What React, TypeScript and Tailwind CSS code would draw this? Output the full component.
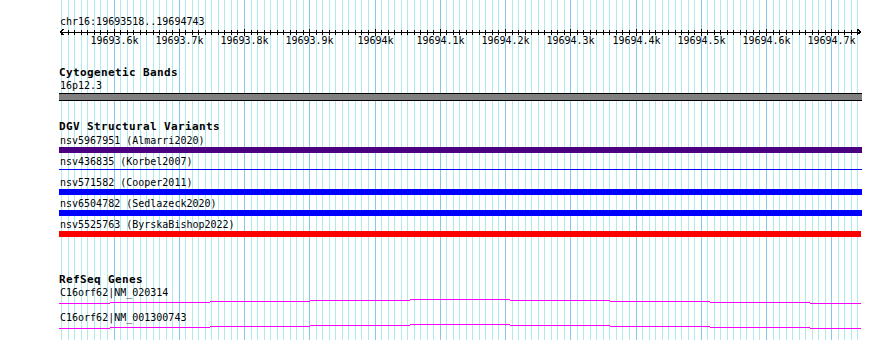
import React from 'react';

// ruler / grid geometry: 19693.6k sits at x=114, 10bp = 6.525px
const gridLines = Array.from({ length: 123 }, (_, i) => {
  const k = i - 8;
  return { x: Math.floor(114 + 6.525 * k), major: k % 10 === 0 };
});

const tickLabels = [
  '19693.6k', '19693.7k', '19693.8k', '19693.9k', '19694k', '19694.1k',
  '19694.2k', '19694.3k', '19694.4k', '19694.5k', '19694.6k', '19694.7k',
];

const variants = [
  { name: 'nsv5967951 (Almarri2020)', color: 'bg-[#4b0082]', thin: false, w: 'w-[803px]' },
  { name: 'nsv436835 (Korbel2007)', color: 'bg-[#0000ff]', thin: true, w: 'w-[803px]' },
  { name: 'nsv571582 (Cooper2011)', color: 'bg-[#0000ff]', thin: false, w: 'w-[803px]' },
  { name: 'nsv6504782 (Sedlazeck2020)', color: 'bg-[#0000ff]', thin: false, w: 'w-[803px]' },
  { name: 'nsv5525763 (ByrskaBishop2022)', color: 'bg-[#ff0000]', thin: false, w: 'w-[802px]' },
];

const genes = ['C16orf62|NM_020314', 'C16orf62|NM_001300743'];

// shallow intron "hat" drawn as 1px steps
const hatSteps: Array<[number, number, number]> = [
  [59, 110, 5], [110, 210, 4], [210, 310, 3], [310, 410, 2], [410, 510, 1],
  [510, 610, 2], [610, 710, 3], [710, 810, 4], [810, 861, 5],
];

const textCls = "pl-[60px] text-[10px] leading-[13px] h-[12px] text-black whitespace-nowrap";
const titleCls = "pl-[59px] text-[11px] leading-[12px] h-[12px] tracking-[0.38px] font-bold text-black whitespace-nowrap";

function Grid() {
  return (
    <svg className="absolute inset-0" width={890} height={340} shapeRendering="crispEdges">
      {gridLines.map((g, i) => (
        <rect key={i} x={g.x} y={0} width={1} height={340} fill={g.major ? '#86c8ec' : '#aeeaee'} />
      ))}
    </svg>
  );
}

function Ruler() {
  return (
    <svg className="block" width={890} height={21} shapeRendering="crispEdges">
      <rect x={60} y={5} width={801} height={1} fill="#000" />
      {gridLines.map((g, i) =>
        g.major ? (
          <rect key={i} x={g.x} y={2} width={1} height={7} fill="#000" />
        ) : (
          <rect key={i} x={g.x} y={3} width={1} height={5} fill="#000" />
        )
      )}
      <polyline points="64,2 60,5 64,8" fill="none" stroke="#000" strokeWidth={1} />
      <polyline points="857,2 861,5 857,8" fill="none" stroke="#000" strokeWidth={1} />
      {tickLabels.map((t, m) => (
        <text
          key={t}
          x={gridLines[8 + m * 10].x + 0.5}
          y={17}
          textAnchor="middle"
          fontFamily="'DejaVu Sans Mono', monospace"
          fontSize={10}
          fill="#000"
          shapeRendering="auto"
        >
          {t}
        </text>
      ))}
    </svg>
  );
}

function GeneHat() {
  return (
    <svg className="block" width={890} height={6} shapeRendering="crispEdges">
      {hatSteps.map(([x1, x2, y]) => (
        <rect key={x1} x={x1} y={y} width={x2 - x1} height={1} fill="#ff00ff" />
      ))}
    </svg>
  );
}

export default function App() {
  return (
    <div className="relative w-[890px] h-[340px] overflow-hidden bg-white font-['DejaVu_Sans_Mono',monospace]">
      <Grid />
      <div className="relative pt-[15px]">
        <div className={textCls}>chr16:19693518..19694743</div>
        <Ruler />

        {/* Cytogenetic Bands */}
        <div className={`${titleCls} mt-[19px]`}>Cytogenetic Bands</div>
        <div className={textCls}>16p12.3</div>
        <div className="ml-[59px] mt-[2px] w-[803px] h-[8px] bg-[#808080] border-y border-black" />

        {/* DGV Structural Variants */}
        <div className={`${titleCls} mt-[20px]`}>DGV Structural Variants</div>
        <div className="mt-[1px]">
          {variants.map((v) => (
            <div key={v.name} className="h-[21px]">
              <div className={textCls}>{v.name}</div>
              <div className="mt-[1px] h-[6px] ml-[59px]">
                {v.thin ? (
                  <div className={`mt-[2px] h-[1px] ${v.w} ${v.color}`} />
                ) : (
                  <div className={`h-[6px] ${v.w} ${v.color}`} />
                )}
              </div>
            </div>
          ))}
        </div>

        {/* RefSeq Genes */}
        <div className={`${titleCls} mt-[35px]`}>RefSeq Genes</div>
        {genes.map((g) => (
          <div key={g} className="h-[25px]">
            <div className={textCls}>{g}</div>
            <GeneHat />
          </div>
        ))}
      </div>
    </div>
  );
}
